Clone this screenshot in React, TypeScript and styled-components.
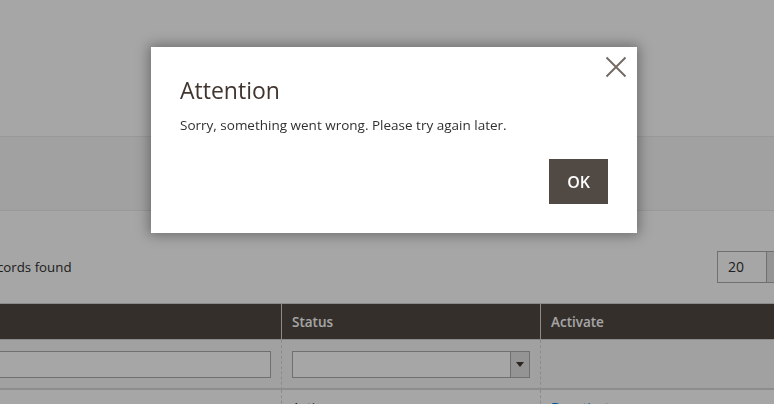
import React from "react";
import styled, { createGlobalStyle } from "styled-components";

const GlobalStyle = createGlobalStyle`
  html, body {
    margin: 0;
    padding: 0;
    overflow: hidden;
    background: #fff;
  }
  body {
    font-family: "Open Sans", "Liberation Sans", sans-serif;
    font-size: 14px;
    color: #303030;
  }
  * {
    box-sizing: border-box;
  }
`;

const App: React.FC = () => {
  return (
    <>
      <GlobalStyle />
      <Page>
        <TopArea />
        <Band />
        <Toolbar>
          <Count>records found</Count>
          <PerPage>
            <PerPageValue>20</PerPageValue>
            <PerPageButton />
          </PerPage>
        </Toolbar>
        <Grid>
          <HeaderCell $first />
          <HeaderCell>Status</HeaderCell>
          <HeaderCell>Activate</HeaderCell>

          <FilterCell $first>
            <TextInput type="text" />
          </FilterCell>
          <FilterCell>
            <SelectBox>
              <SelectValue />
              <SelectArrow />
            </SelectBox>
          </FilterCell>
          <FilterCell />

          <DataCell $first />
          <DataCell>Active</DataCell>
          <DataCell>
            <ActionLink href="#">Deactivate</ActionLink>
          </DataCell>
        </Grid>
      </Page>

      <Overlay />
      <Modal role="dialog">
        <CloseButton aria-label="Close">
          <svg width="24" height="24" viewBox="0 0 24 24">
            <path
              d="M2.5 2.5 L21.5 21.5 M21.5 2.5 L2.5 21.5"
              stroke="#736963"
              strokeWidth="1.9"
              fill="none"
            />
          </svg>
        </CloseButton>
        <ModalTitle>Attention</ModalTitle>
        <ModalMessage>
          Sorry, something went wrong. Please try again later.
        </ModalMessage>
        <ModalFooter>
          <OkButton>OK</OkButton>
        </ModalFooter>
      </Modal>
    </>
  );
};

export default App;

// Page behind the overlay

const Page = styled.div`
  width: 900px;
  margin-left: -100px;
`;

const TopArea = styled.div`
  height: 136px;
  background: #fff;
`;

const Band = styled.div`
  height: 75px;
  background: #f8f8f8;
  border-top: 1px solid #ececec;
  border-bottom: 1px solid #ececec;
`;

const Toolbar = styled.div`
  height: 92px;
  display: flex;
  align-items: center;
  justify-content: space-between;
  padding: 20px 0 0 84px;
`;

const Count = styled.span`
  font-size: 13.3px;
  color: #303030;
`;

const PerPage = styled.div`
  display: flex;
  height: 32px;
`;

const PerPageValue = styled.div`
  width: 50px;
  height: 32px;
  padding: 0 10px;
  line-height: 30px;
  font-size: 14px;
  border: 1px solid #adadad;
  background: #fff;
  color: #303030;
`;

const PerPageButton = styled.div`
  width: 33px;
  height: 32px;
  background: #e3e3e3;
  border: 1px solid #adadad;
  border-left: none;
`;

const Grid = styled.div`
  display: grid;
  grid-template-columns: 381px 259px 1fr;
`;

const HeaderCell = styled.div<{ $first?: boolean }>`
  height: 37px;
  display: flex;
  align-items: center;
  padding: 0 10px;
  background: #514943;
  color: #fff;
  font-size: 13.5px;
  font-weight: 600;
  border-top: 1px solid #d6d6d6;
  border-bottom: 1px solid #d6d6d6;
  border-left: ${(p) => (p.$first ? "none" : "1px solid #d6d6d6")};
`;

const FilterCell = styled.div<{ $first?: boolean }>`
  padding: 11px 10px 10px;
  min-height: 50px;
  background: #f8f8f8;
  border-bottom: 2px solid #d9d9d9;
  border-left: ${(p) => (p.$first ? "none" : "1px dashed #d6d6d6")};
`;

const TextInput = styled.input`
  display: block;
  width: 100%;
  height: 27px;
  margin: 0;
  border: 1px solid #adadad;
  background: #fff;
  font: inherit;
`;

const SelectBox = styled.div`
  display: flex;
  height: 27px;
  border: 1px solid #adadad;
  background: #fff;
`;

const SelectValue = styled.div`
  flex: 1;
`;

const SelectArrow = styled.div`
  width: 19px;
  background: #e3e3e3;
  border-left: 1px solid #adadad;
  display: flex;
  align-items: center;
  justify-content: center;

  &::after {
    content: "";
    border-top: 5px solid #41362f;
    border-left: 4px solid transparent;
    border-right: 4px solid transparent;
  }
`;

const DataCell = styled.div<{ $first?: boolean }>`
  padding: 7px 10px;
  line-height: 20px;
  min-height: 40px;
  font-size: 13.5px;
  background: #fff;
  color: #303030;
  border-left: ${(p) => (p.$first ? "none" : "1px dashed #d6d6d6")};
`;

const ActionLink = styled.a`
  color: #007bdb;
  text-decoration: none;
`;

// Modal

const Overlay = styled.div`
  position: fixed;
  inset: 0;
  background: rgba(0, 0, 0, 0.35);
`;

const Modal = styled.div`
  position: fixed;
  top: 47px;
  left: 151px;
  width: 486px;
  padding: 30px 29px 29px;
  background: #fff;
  box-shadow: 0 0 12px 2px rgba(0, 0, 0, 0.35);
`;

const CloseButton = styled.button`
  position: absolute;
  top: 8px;
  right: 9px;
  width: 24px;
  height: 24px;
  padding: 0;
  border: none;
  background: none;
  cursor: pointer;

  svg {
    display: block;
  }
`;

const ModalTitle = styled.h1`
  margin: 0 0 11px;
  font-size: 23px;
  line-height: 27px;
  font-weight: 400;
  color: #41362f;
`;

const ModalMessage = styled.p`
  margin: 0;
  font-size: 13.5px;
  line-height: 20px;
  color: #303030;
`;

const ModalFooter = styled.div`
  display: flex;
  justify-content: flex-end;
  margin-top: 24px;
`;

const OkButton = styled.button`
  height: 45px;
  padding: 0 17px;
  background: #514943;
  border: 1px solid #514943;
  color: #fff;
  font-family: "Open Sans", "Liberation Sans", sans-serif;
  font-size: 16px;
  font-weight: 600;
  cursor: pointer;
`;
